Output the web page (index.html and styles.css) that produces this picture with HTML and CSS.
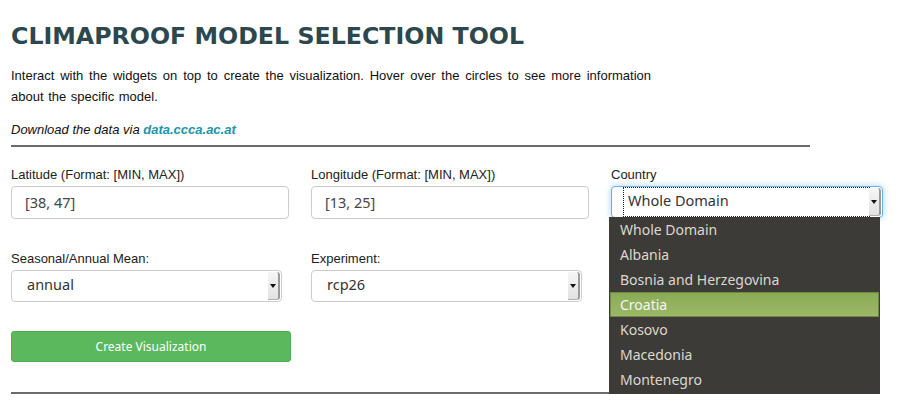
FILE: index.html
```html
<!DOCTYPE html>
<html>
<head>
<meta charset="utf-8">
<link rel="stylesheet" href="styles.css">
</head>
<body>
<div class="page">
  <h1 class="title">CLIMAPROOF MODEL SELECTION TOOL</h1>
  <p class="intro">Interact with the widgets on top to create the visualization. Hover over the circles to see more information about the specific model.</p>
  <p class="download">Download the data via <a class="link" href="#">data.ccca.ac.at</a></p>
  <div class="rule"></div>

  <div class="row row-first">
    <div class="field">
      <div class="label">Latitude (Format: [MIN, MAX])</div>
      <div class="input">[38, 47]</div>
    </div>
    <div class="field">
      <div class="label">Longitude (Format: [MIN, MAX])</div>
      <div class="input">[13, 25]</div>
    </div>
    <div class="field field-country">
      <div class="label">Country</div>
      <div class="select select-focus">
        <span class="select-value focus-ring">Whole Domain</span>
        <span class="select-arrow"><span class="tri"></span></span>
      </div>
      <ul class="dropdown">
        <li>Whole Domain</li>
        <li>Albania</li>
        <li>Bosnia and Herzegovina</li>
        <li class="active">Croatia</li>
        <li>Kosovo</li>
        <li>Macedonia</li>
        <li>Montenegro</li>
        <li>Serbia</li>
      </ul>
    </div>
  </div>

  <div class="row row-second">
    <div class="field">
      <div class="label">Seasonal/Annual Mean:</div>
      <div class="select select-small">
        <span class="select-value">annual</span>
        <span class="select-arrow"><span class="tri"></span></span>
      </div>
    </div>
    <div class="field">
      <div class="label">Experiment:</div>
      <div class="select select-small">
        <span class="select-value">rcp26</span>
        <span class="select-arrow"><span class="tri"></span></span>
      </div>
    </div>
  </div>

  <div class="button">Create Visualization</div>
  <div class="rule rule-bottom"></div>
</div>
</body>
</html>
```

FILE: styles.css
```css
* { box-sizing: border-box; }
html, body { margin: 0; padding: 0; background: #fff; }
body { font-family: "Liberation Sans", Arial, sans-serif; color: #111; overflow: hidden; }

.page { padding: 0 11px; width: 917px; }

.title {
  font-family: "DejaVu Sans", sans-serif;
  font-weight: bold;
  font-size: 23.7px;
  line-height: 30px;
  color: #2c474d;
  margin: 21px 0 0 0;
  letter-spacing: 0;
}

.intro {
  width: 640px;
  font-size: 13px;
  line-height: 21px;
  text-align: justify;
  word-spacing: 1px;
  margin: 14px 0 0 0;
  color: #111;
}

.download {
  font-size: 13px;
  font-style: italic;
  line-height: 21px;
  margin: 12px 0 0 0;
}
.link { color: #1b95a8; font-weight: bold; text-decoration: none; }

.rule { width: 799px; height: 2px; background: #6b6b6b; margin-top: 5px; }

.row { display: grid; grid-template-columns: 300px 300px 300px; }
.row-first { margin-top: 20px; }
.row-second { margin-top: 32px; }

.field { position: relative; }
.label { font-size: 13px; line-height: 15px; color: #222; margin-bottom: 4px; }

.input {
  width: 278px;
  height: 33px;
  border: 1px solid #ccc;
  border-radius: 4px;
  padding: 0 0 0 13px;
  font-family: "Noto Sans", sans-serif;
  font-size: 14.5px;
  line-height: 30px;
  color: #444;
}

.select {
  display: flex;
  width: 272px;
  height: 32px;
  border: 1px solid #ccc;
  border-radius: 4px;
  background: #fff;
  font-family: "Noto Sans", sans-serif;
  font-size: 14.5px;
  color: #333;
  padding: 1px 1px 1px 12px;
}
.select-small { width: 271px; }
.select-value { flex: 1; line-height: 25px; padding-left: 3px; padding-bottom: 3px; }
.select-arrow {
  width: 12px;
  display: flex;
  align-items: center;
  justify-content: center;
  background: linear-gradient(#f6f6f6, #e2e2e2);
  border-right: 2px solid #9a9a9a;
  border-bottom: 1px solid #b0b0b0;
  border-radius: 0 3px 3px 0;
}
.tri {
  width: 0; height: 0;
  border-left: 3px solid transparent;
  border-right: 3px solid transparent;
  border-top: 4px solid #111;
}

.select-focus {
  border-color: #66afe9;
  box-shadow: 0 0 7px rgba(102, 175, 233, 0.55);
  padding-left: 12px;
}
.focus-ring { outline: 1px dotted #222; outline-offset: 0; padding-left: 4px; margin-right: 0; color: #333; }

.dropdown {
  position: absolute;
  left: -2px;
  top: 50px;
  width: 271px;
  margin: 0;
  padding: 0;
  list-style: none;
  background: #3c3b37;
  font-family: "Noto Sans", sans-serif;
  font-size: 14px;
  color: #dcd8cf;
  z-index: 5;
}
.dropdown li { height: 25px; line-height: 25px; padding-left: 11px; }
.dropdown li.active {
  background: linear-gradient(#8aab56, #9cb868);
  border: 1px solid #6d8b40;
  margin: 0 1px;
  padding-left: 9px;
  line-height: 23px;
  color: #f6f6ee;
}

.button {
  width: 280px;
  height: 31px;
  margin-top: 29px;
  background: #5cb85c;
  border: 1px solid #4cae4c;
  border-radius: 3px;
  color: #fff;
  font-family: "Noto Sans", sans-serif;
  font-size: 12px;
  line-height: 29px;
  text-align: center;
}

.rule-bottom { margin-top: 30px; }
```
